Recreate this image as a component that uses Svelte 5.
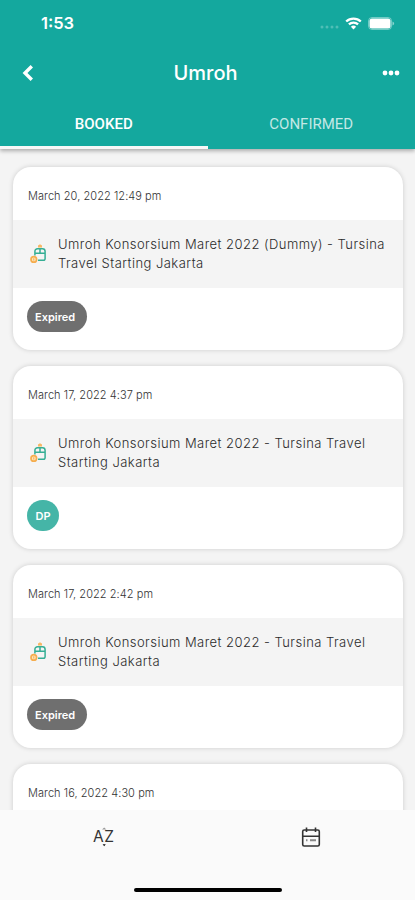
<script>
  const bookings = [
    {
      date: "March 20, 2022 12:49 pm",
      title: "Umroh Konsorsium Maret 2022 (Dummy) - Tursina Travel Starting Jakarta",
      status: "Expired",
    },
    {
      date: "March 17, 2022 4:37 pm",
      title: "Umroh Konsorsium Maret 2022 - Tursina Travel Starting Jakarta",
      status: "DP",
    },
    {
      date: "March 17, 2022 2:42 pm",
      title: "Umroh Konsorsium Maret 2022 - Tursina Travel Starting Jakarta",
      status: "Expired",
    },
    {
      date: "March 16, 2022 4:30 pm",
    },
  ];
  const tabs = ["BOOKED", "CONFIRMED"];
  let active = $state("BOOKED");
</script>

<div class="screen">
  <header>
    <div class="status-bar">
      <span class="time">1:53</span>
      <div class="indicators">
        <svg class="signal" width="19" height="4" viewBox="0 0 19 4">
          <circle cx="2" cy="2" r="1.5" />
          <circle cx="7" cy="2" r="1.5" />
          <circle cx="12" cy="2" r="1.5" />
          <circle cx="17" cy="2" r="1.5" />
        </svg>
        <svg class="wifi" width="17" height="13" viewBox="0 0 17 13">
          <path d="M1.2 4.5a10.5 10.5 0 0 1 14.6 0" />
          <path d="M3.9 7.4a6.7 6.7 0 0 1 9.2 0" />
          <path class="dot" d="M8.5 12.4 5.9 9.7a3.8 3.8 0 0 1 5.2 0z" />
        </svg>
        <svg class="battery" width="27" height="13" viewBox="0 0 27 13">
          <rect class="shell" x="0.5" y="0.5" width="23" height="12" rx="3.5" />
          <rect x="1.5" y="1.5" width="21" height="10" rx="2.5" />
          <path class="cap" d="M24.5 4.5q1.6.4 1.6 2t-1.6 2z" />
        </svg>
      </div>
    </div>
    <div class="title-bar">
      <button aria-label="Back">
        <svg width="12" height="18" viewBox="0 0 12 18">
          <path d="M9.8 2.2 3 9l6.8 6.8" />
        </svg>
      </button>
      <h1>Umroh</h1>
      <button aria-label="More">
        <svg class="more" width="18" height="6" viewBox="0 0 18 6">
          <circle cx="3" cy="3" r="2.4" />
          <circle cx="9" cy="3" r="2.4" />
          <circle cx="15" cy="3" r="2.4" />
        </svg>
      </button>
    </div>
    <nav class="tabs">
      {#each tabs as tab}
        <button class="tab" class:active={active === tab} onclick={() => (active = tab)}>{tab}</button>
      {/each}
    </nav>
  </header>

  <main>
    {#each bookings as booking}
      <article class="card">
        <div class="date">{booking.date}</div>
        <div class="trip">
          {#if booking.title}
            <svg width="18" height="20" viewBox="0 0 18 20">
              <path class="top" d="M8 3.6V1.4L10 .2l2 1.2v2.2z" />
              <path class="bag" d="M4.9 11.5V7.4a2.6 2.6 0 0 1 2.6-2.6h5a2.6 2.6 0 0 1 2.6 2.6v7.4a1.5 1.5 0 0 1-1.5 1.5H8M5 9.3h10M10 4.8v4.5" />
              <circle class="coin" cx="3.8" cy="15.4" r="2.8" />
              <path class="mark" d="M3.8 14.2v2.4" />
            </svg>
            <p>{booking.title}</p>
          {/if}
        </div>
        <div class="foot">
          {#if booking.status}
            <span class="badge" class:paid={booking.status === "DP"}>{booking.status}</span>
          {/if}
        </div>
      </article>
    {/each}
  </main>

  <footer>
    <div class="actions">
      <button aria-label="Sort by name">
        <svg width="24" height="24" viewBox="0 0 24 24">
          <text x="1" y="17.4">AZ</text>
          <path class="up" d="m10 4.5 2.2-2 2.2 2z" />
          <path class="down" d="m10.6 19.2 1.6 2 1.6-2z" />
        </svg>
      </button>
      <button aria-label="Filter by date">
        <svg class="calendar" width="24" height="24" viewBox="0 0 24 24">
          <rect x="3.7" y="5" width="16.6" height="16" rx="1.5" />
          <path d="M4 11.2h16M7.5 2.5v4.5M16.5 2.5v4.5" />
          <path class="days" d="M7 15.3h1.5M11 15.3h6" />
        </svg>
      </button>
    </div>
    <div class="home"></div>
  </footer>
</div>

<style>
  :global(body) {
    margin: 0;
  }
  .screen {
    width: 415px;
    height: 900px;
    display: flex;
    flex-direction: column;
    overflow: hidden;
    background: #f4f4f4;
    font-family: Inter, "Liberation Sans", sans-serif;
  }
  button {
    border: 0;
    padding: 0;
    background: none;
    font: inherit;
    display: flex;
    align-items: center;
    justify-content: center;
  }
  header {
    flex: none;
    height: 149px;
    display: flex;
    flex-direction: column;
    background: #14a89e;
    color: #fff;
    box-shadow: 0 2px 4px rgba(0, 0, 0, 0.3);
    z-index: 1;
  }
  .status-bar {
    height: 46px;
    display: flex;
    align-items: center;
    justify-content: space-between;
    padding: 0 20px 0 41px;
    box-sizing: border-box;
  }
  .time {
    font-size: 16.5px;
    font-weight: 600;
  }
  .indicators {
    display: flex;
    align-items: center;
    gap: 6px;
  }
  .signal {
    fill: #fff;
    opacity: 0.25;
    margin-top: 8px;
  }
  .wifi {
    fill: none;
    stroke: #fff;
    stroke-width: 2.3;
  }
  .wifi .dot {
    fill: #fff;
    stroke: none;
  }
  .battery {
    fill: #fff;
  }
  .battery .shell {
    fill: none;
    stroke: #fff;
    opacity: 0.4;
  }
  .battery .cap {
    opacity: 0.5;
  }
  .title-bar {
    height: 54px;
    display: flex;
    align-items: center;
    justify-content: space-between;
    padding: 0 15px 0 22px;
  }
  .title-bar button path {
    fill: none;
    stroke: #fff;
    stroke-width: 3.4;
  }
  .more {
    fill: #fff;
  }
  h1 {
    margin: 0;
    padding-right: 5px;
    font-size: 20px;
    font-weight: 500;
  }
  .tabs {
    flex: 1;
    display: grid;
    grid-template-columns: 1fr 1fr;
  }
  .tab {
    padding-top: 2px;
    font-family: Roboto, sans-serif;
    font-size: 15px;
    color: rgba(255, 255, 255, 0.75);
    border-bottom: 3px solid transparent;
  }
  .tab.active {
    color: #fff;
    font-weight: 500;
    border-bottom-color: #f7f7f7;
  }
  main {
    flex: 1;
    min-height: 0;
    overflow: hidden;
    display: flex;
    flex-direction: column;
    gap: 16px;
    padding: 18px 12px 0 13px;
  }
  .card {
    flex: none;
    height: 183px;
    display: flex;
    flex-direction: column;
    border-radius: 18px;
    background: #fff;
    box-shadow: 0 0 5px rgba(0, 0, 0, 0.16);
  }
  .date {
    height: 53px;
    padding: 4px 15px 0;
    box-sizing: border-box;
    display: flex;
    align-items: center;
    font-size: 11px;
    font-weight: 300;
    letter-spacing: 0.06px;
    color: #333;
  }
  .trip {
    height: 68px;
    box-sizing: border-box;
    padding: 0 12px 0 17px;
    display: flex;
    align-items: center;
    gap: 10px;
    background: #f4f4f4;
  }
  .trip svg {
    flex: none;
    fill: none;
  }
  .top {
    fill: #f8b765;
  }
  .bag {
    stroke: #35ae94;
    stroke-width: 1.5;
  }
  .coin {
    stroke: #f5ad4e;
    stroke-width: 1.7;
    fill: #fde5bd;
  }
  .mark {
    stroke: #f5ad4e;
  }
  .trip p {
    margin: 0;
    font-size: 13px;
    line-height: 19px;
    font-weight: 300;
    letter-spacing: 0.46px;
    color: #2b2b2b;
  }
  .foot {
    flex: 1;
    padding: 13px 14px 0;
    display: flex;
    align-items: flex-start;
  }
  .badge {
    height: 31px;
    padding: 0 12px 0 8px;
    display: flex;
    align-items: center;
    border-radius: 16px;
    background: #6f6f6f;
    color: #fff;
    font-size: 11px;
    font-weight: 600;
  }
  .badge.paid {
    padding: 0 8.5px;
    background: #45b5a7;
  }
  footer {
    flex: none;
    height: 90px;
    display: flex;
    flex-direction: column;
    align-items: center;
    background: #fafafa;
    z-index: 1;
  }
  .actions {
    width: 100%;
    height: 54px;
    display: grid;
    grid-template-columns: 1fr 1fr;
  }
  .actions text {
    font-size: 15.5px;
    letter-spacing: 0.6px;
    fill: #333;
  }
  .up {
    fill: #999;
  }
  .down {
    fill: #111;
  }
  .calendar {
    fill: none;
    stroke: #333;
    stroke-width: 1.6;
  }
  .calendar .days {
    stroke: #888;
    stroke-width: 2;
  }
  .home {
    width: 148px;
    height: 4px;
    margin-top: 24px;
    border-radius: 3px;
    background: #000;
  }
</style>
